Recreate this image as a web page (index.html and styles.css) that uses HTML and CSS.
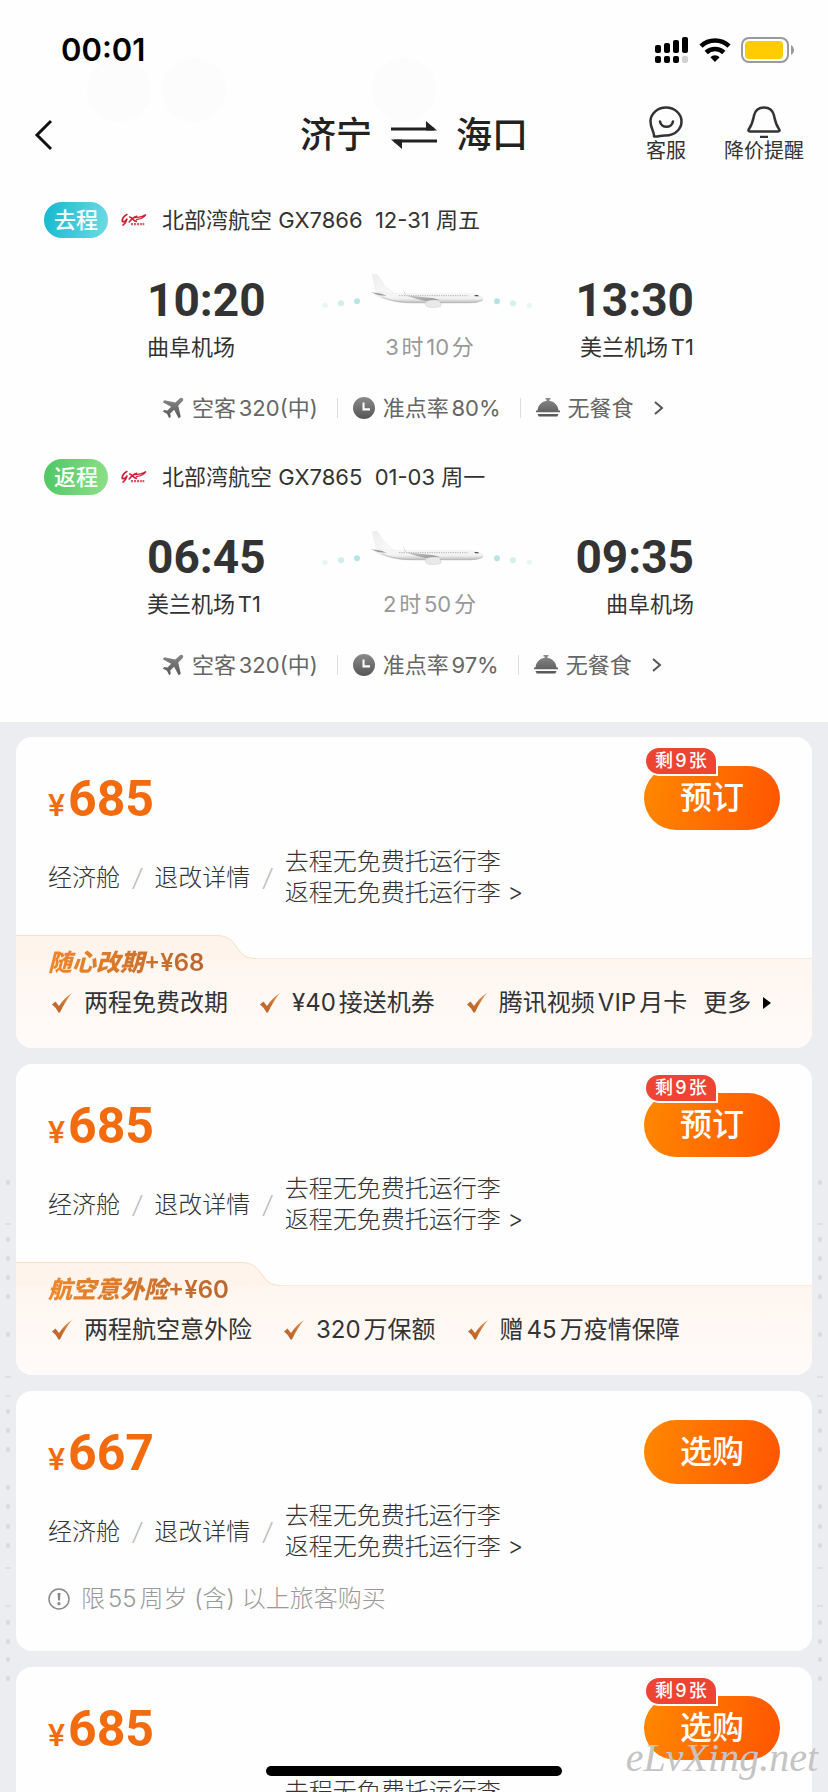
FILE: index.html
```html
<!DOCTYPE html>
<html lang="zh-CN">
<head>
<meta charset="utf-8">
<meta name="viewport" content="width=device-width, initial-scale=1">
<title>济宁 ⇌ 海口</title>
<link rel="stylesheet" href="styles.css">
</head>
<body>
<svg class="defs" width="0" height="0" aria-hidden="true">
  <defs>
    <linearGradient id="grey" x1="0" y1="0" x2="0" y2="1"><stop offset="0" stop-color="#8a8a8a"/><stop offset="1" stop-color="#565656"/></linearGradient>
    <linearGradient id="copper" x1="1" y1="0" x2="0" y2="1"><stop offset="0" stop-color="#eba063"/><stop offset=".5" stop-color="#c9702f"/><stop offset="1" stop-color="#b9602a"/></linearGradient>
    <linearGradient id="hull" x1="0" y1="0" x2="0" y2="1"><stop offset="0" stop-color="#fafafa"/><stop offset=".6" stop-color="#f0f0f0"/><stop offset="1" stop-color="#b9b9b9"/></linearGradient>
    <linearGradient id="fin" x1="0" y1="0" x2="1" y2="1"><stop offset="0" stop-color="#ededed"/><stop offset="1" stop-color="#fbfbfb"/></linearGradient>
    <linearGradient id="wing" x1="0" y1="0" x2="1" y2="1"><stop offset="0" stop-color="#e6e6e6"/><stop offset="1" stop-color="#8f8f8f"/></linearGradient>
    <symbol id="plane" viewBox="0 0 24 24"><path fill="url(#grey)" d="M22.600 1.300c1 1 .6 2.500-.5 3.700l-4.300 4.300 2.600 12.200-2.200 1.800-5-9.400-4.200 4.100.5 3.500-1.600 1.600-2.500-4.700L.8 15.900l1.600-1.600 3.500.5 4.100-4.200L.8 5.700l1.800-2.100 12 2.500L18.900 1.800c1.200-1.100 2.700-1.500 3.700-.5z"/></symbol>
    <symbol id="clock" viewBox="0 0 24 24"><circle cx="12" cy="12" r="12" fill="url(#grey)"/><path d="M11.500 6v7.500h7" fill="none" stroke="#fff" stroke-width="2.200"/></symbol>
    <symbol id="meal" viewBox="0 0 24 20"><path fill="url(#grey)" d="M9.500 0h5v1.600h-1.200v1.200c5 .6 8.700 4.600 9.200 9.700h1.500v1.700H0v-1.700h1.500c.5-5.100 4.200-9.100 9.200-9.700V1.600H9.500zM1.500 16h21l-1.200 2.400H2.700z"/></symbol>
    <symbol id="check" viewBox="0 0 20 20"><path fill="url(#copper)" d="M0 11.500 3.500 8.600 7 13C10.500 7.500 14.500 3.500 20 0c-4.500 5.500-8.500 12-12 19.500H6.500C4.800 16.200 2.800 13.500 0 11.500z"/></symbol>
    <symbol id="airline" viewBox="0 0 76 38"><g fill="none" stroke="#cf1f35" stroke-linecap="round"><path stroke-width="5" d="M17 3C8 7 2 17 4 23c4 2 10-1 14-8-2 7-6 15-12 19"/><path stroke-width="4.500" d="M25 10c8 0 10 12 20 13M46 8C38 10 30 17 24 25"/><path stroke-width="3.500" d="M38 12c12 0 24-2 35-9-6 8-16 13-28 15"/></g><g fill="#cf1f35"><path d="M29 28h6v6h-6zM38 28h6v6h-6zM47 28h6v6h-6zM56 28h5v6h-5zM63 28h5v6h-5z" opacity=".75"/></g></symbol>
    <symbol id="aircraft" viewBox="0 56 690 156">
      <g fill="#a9dfe1"><circle cx="138" cy="138" r="9" opacity=".85"/><circle cx="90" cy="144" r="9" opacity=".55"/><circle cx="42" cy="150" r="8" opacity=".28"/><circle cx="558" cy="138" r="9" opacity=".85"/><circle cx="606" cy="144" r="9" opacity=".5"/><circle cx="655" cy="150" r="8" opacity=".25"/></g>
      <path fill="url(#fin)" stroke="#e4e4e4" d="M182 51l14 2 26 38 30 25-56-4z"/>
      <path fill="url(#hull)" stroke="#dedede" d="M192 111c30 0 60 5 80 4h200c20 0 44 9 46 14-4 10-20 14-40 14H292c-40-2-75-10-100-24z"/>
      <path fill="none" stroke="#aaa" stroke-width="2.500" stroke-dasharray="4 3" d="M264 121h206"/>
      <path fill="#9a9a9a" d="M180 111l32 4 15 6-24-1z"/>
      <path fill="none" stroke="#b4b4b4" stroke-width="2" d="M212 124c26 12 60 18 90 18h170c20 0 36-3 44-9"/>
      <path fill="url(#wing)" d="M274 98l12 22 82 9 18 5-34 5c-20-4-50-11-70-20z"/>
      <path fill="#e9e9e9" stroke="#b5b5b5" d="M344 139c10-6 36-6 42-2l5 14c-6 6-34 7-43 3-5-4-6-10-4-15z"/>
      <path fill="#555" d="M490 119h10l5 4h-13z"/>
    </symbol>
    <symbol id="gutter" viewBox="0 0 10 520"><path fill="none" stroke="#d9dadf" stroke-width="4" stroke-linecap="round" d="M5 6v1M5 63v1M5 82v1M5 101v1M5 120v1M5 158v1M5 235v1M5 254v1M5 273v1M5 311v1M5 330v1M5 350v1M5 369v1M5 446v1M5 465v1M5 483v1M5 502v1"/><path stroke="#dfe0e5" stroke-width="2" d="M2 48h6M2 201h6M2 220h6M2 392h6M2 430h6"/></symbol>
  </defs>
</svg>

<div class="screen">
  <header class="top">
    <div class="glow" aria-hidden="true"><i></i><i></i><i></i></div>
    <div class="status">
      <span class="status-time">00:01</span>
      <div class="status-icons">
        <svg width="34" height="28" viewBox="0 0 34 28" aria-label="信号"><rect x="0" y="9" width="6" height="8" rx="2"/><rect x="9" y="7" width="6" height="10" rx="2"/><rect x="18" y="4" width="6" height="13" rx="2"/><rect x="27" y="1" width="6" height="16" rx="2"/><rect x="0" y="20" width="6" height="7" rx="2"/><rect x="9" y="20" width="6" height="7" rx="2"/><rect x="18" y="20" width="6" height="7" rx="2"/><rect x="27" y="20" width="6" height="7" rx="2" fill="#d0d0d0"/></svg>
        <svg width="32" height="24" viewBox="0 0 32 24" aria-label="无线网络"><path d="M16 24l-4.600-4.800a6.500 6.500 0 0 1 9.200 0z"/><path fill="none" stroke="#000" stroke-width="4.600" d="M2 8.200a20 20 0 0 1 28 0M7.200 14.500a12.700 12.700 0 0 1 17.600 0"/></svg>
        <svg width="54" height="26" viewBox="0 0 54 26" aria-label="电量"><rect x="1" y="1" width="46" height="24" rx="7" fill="none" stroke="#9a9a9a" stroke-width="2"/><rect x="4" y="4" width="38" height="18" rx="4" fill="#ffcc00"/><path fill="#9a9a9a" d="M50 8c4 2 4 8 0 10z"/></svg>
      </div>
    </div>
    <nav class="nav">
      <button class="back" aria-label="返回"><svg width="20" height="34" viewBox="0 0 20 34"><path d="M17 3 3 17l14 14"/></svg></button>
      <h1 class="title">济宁
        <svg width="46" height="28" viewBox="0 0 46 28" aria-label="往返"><path d="M0 8h43M3 20h43" fill="none" stroke="#222" stroke-width="3"/><path fill="#222" d="M35 0l11 9.500H35zM11 28 0 18.500h11z"/></svg>
        海口</h1>
      <div class="actions">
        <button class="action"><svg width="34" height="32" viewBox="0 0 34 32"><path stroke-linejoin="round" d="M5 30.500C5.500 26 1.500 22 1.500 15.500A15.500 14 0 1 1 17 29.500C12 29 10 31 5 30.500z"/><path d="M11 15.500c1 7 12 7 13 0" stroke-linecap="round"/></svg>客服</button>
        <button class="action"><svg width="34" height="32" viewBox="0 0 34 32"><path d="M3 25.500c-1.600 0-2-1-1-2.400C5.500 18 6 14 7 9.500 8.300 4 12 1.500 17 1.500S25.700 4 27 9.500c1 4.500 1.500 8.500 5 13.600 1 1.400.6 2.400-1 2.400z"/><path d="M13 31h8"/></svg>降价提醒</button>
      </div>
    </nav>

    <section class="leg">
      <div class="leg-head"><span class="badge badge-go">去程</span><svg class="airline"><use href="#airline"/></svg><span>北部湾航空 GX7866&nbsp; 12-31 周五</span></div>
      <div class="route">
        <div class="stop"><time>10:20</time><span>曲阜机场</span></div>
        <div class="flight"><svg class="aircraft"><use href="#aircraft"/></svg><span class="duration">3时10分</span></div>
        <div class="stop stop-end"><time>13:30</time><span>美兰机场T1</span></div>
      </div>
      <button class="facts">
        <span class="fact"><svg width="22" height="22"><use href="#plane"/></svg>空客320(中)</span>
        <span class="fact"><svg width="22" height="22"><use href="#clock"/></svg>准点率80%</span>
        <span class="fact"><svg width="24" height="20"><use href="#meal"/></svg>无餐食</span>
        <svg class="more" width="10" height="16" viewBox="0 0 10 16"><path d="M1 2l7 6-7 6"/></svg>
      </button>
    </section>

    <section class="leg">
      <div class="leg-head"><span class="badge badge-back">返程</span><svg class="airline"><use href="#airline"/></svg><span>北部湾航空 GX7865&nbsp; 01-03 周一</span></div>
      <div class="route">
        <div class="stop"><time>06:45</time><span>美兰机场T1</span></div>
        <div class="flight"><svg class="aircraft"><use href="#aircraft"/></svg><span class="duration">2时50分</span></div>
        <div class="stop stop-end"><time>09:35</time><span>曲阜机场</span></div>
      </div>
      <button class="facts">
        <span class="fact"><svg width="22" height="22"><use href="#plane"/></svg>空客320(中)</span>
        <span class="fact"><svg width="22" height="22"><use href="#clock"/></svg>准点率97%</span>
        <span class="fact"><svg width="24" height="20"><use href="#meal"/></svg>无餐食</span>
        <svg class="more" width="10" height="16" viewBox="0 0 10 16"><path d="M1 2l7 6-7 6"/></svg>
      </button>
    </section>
  </header>

  <main class="offers">
    <svg class="gutter gutter-left" aria-hidden="true"><use href="#gutter"/></svg>
    <svg class="gutter gutter-right" aria-hidden="true"><use href="#gutter"/></svg>

    <article class="card">
      <div class="card-top"><div class="price"><small>¥</small>685</div><button class="buy">预订<span class="left">剩9张</span></button></div>
      <div class="terms"><span>经济舱</span><i>/</i><span>退改详情</span><i>/</i><span>去程无免费托运行李<br>返程无免费托运行李 &gt;</span></div>
      <div class="promo">
        <div class="promo-edge"><div class="tab"><b class="promo-name"><em>随心改期</em>+¥68</b></div><svg class="curve" width="40" height="24" viewBox="0 0 40 24"><path class="fill" d="M0 0c12 0 16 5 21 12s8 11 19 11v1H0z"/><path class="line" d="M0 .5c12 0 16 5 21 12s8 11 19 11"/></svg></div>
        <ul class="perks">
          <li><svg><use href="#check"/></svg>两程免费改期</li><li><svg><use href="#check"/></svg>¥40接送机券</li><li><svg><use href="#check"/></svg>腾讯视频VIP月卡</li>
          <li class="all">更多<svg viewBox="0 0 8 12"><path d="M0 0l8 6-8 6z"/></svg></li>
        </ul>
      </div>
    </article>

    <article class="card">
      <div class="card-top"><div class="price"><small>¥</small>685</div><button class="buy">预订<span class="left">剩9张</span></button></div>
      <div class="terms"><span>经济舱</span><i>/</i><span>退改详情</span><i>/</i><span>去程无免费托运行李<br>返程无免费托运行李 &gt;</span></div>
      <div class="promo">
        <div class="promo-edge"><div class="tab"><b class="promo-name"><em>航空意外险</em>+¥60</b></div><svg class="curve" width="40" height="24" viewBox="0 0 40 24"><path class="fill" d="M0 0c12 0 16 5 21 12s8 11 19 11v1H0z"/><path class="line" d="M0 .5c12 0 16 5 21 12s8 11 19 11"/></svg></div>
        <ul class="perks">
          <li><svg><use href="#check"/></svg>两程航空意外险</li><li><svg><use href="#check"/></svg>320万保额</li><li><svg><use href="#check"/></svg>赠45万疫情保障</li>
        </ul>
      </div>
    </article>

    <article class="card">
      <div class="card-top"><div class="price"><small>¥</small>667</div><button class="buy">选购</button></div>
      <div class="terms"><span>经济舱</span><i>/</i><span>退改详情</span><i>/</i><span>去程无免费托运行李<br>返程无免费托运行李 &gt;</span></div>
      <p class="notice"><svg width="22" height="22" viewBox="0 0 22 22"><circle cx="11" cy="11" r="10" fill="none" stroke="#888" stroke-width="1.500"/><path d="M9.500 5h3l-.6 7.500h-1.800z"/><circle cx="11" cy="15.700" r="1.600"/></svg>限55周岁 (含) 以上旅客购买</p>
    </article>

    <article class="card">
      <div class="card-top"><div class="price"><small>¥</small>685</div><button class="buy">选购<span class="left">剩9张</span></button></div>
      <div class="terms"><span>经济舱</span><i>/</i><span>退改详情</span><i>/</i><span>去程无免费托运行李<br>返程无免费托运行李 &gt;</span></div>
    </article>
  </main>

  <div class="home-bar"></div>
  <div class="watermark">eLvXing.net</div>
</div>
</body>
</html>
```
FILE: styles.css
```css
* { box-sizing: border-box; }

body {
  margin: 0;
  color: #333;
  background: #ecedf1;
  font-family: Inter, "Noto Sans CJK SC", sans-serif;
  font-size: 22px;
  line-height: 32px;
  text-autospace: normal;
}

button {
  margin: 0;
  padding: 0;
  border: 0;
  background: none;
  color: inherit;
  font: inherit;
}

svg { display: block; flex: none; }

.defs { position: absolute; }

.screen {
  position: relative;
  height: 100vh;
  overflow: hidden;
}

/* Header */
.top {
  position: relative;
  padding-bottom: 41px;
  background: #fefefe;
}

.glow i {
  position: absolute;
  top: 58px;
  left: 87px;
  width: 64px;
  height: 64px;
  border-radius: 50%;
  background: #fcfcfc;
}
.glow i:nth-child(2) { left: 162px; }
.glow i:nth-child(3) { left: 372px; }

.status {
  position: relative;
  display: flex;
  align-items: center;
  justify-content: space-between;
  height: 100px;
  padding: 0 33px 0 61px;
}
.status-time {
  color: #000;
  font-size: 31px;
  font-weight: 600;
}
.status-icons {
  display: flex;
  align-items: center;
  gap: 10px;
}

.nav {
  position: relative;
  display: grid;
  grid-template-columns: 1fr auto 1fr;
  align-items: center;
  height: 70px;
  padding: 0 24px;
}
.back { padding-left: 10px; }
.back svg {
  fill: none;
  stroke: #111;
  stroke-width: 3;
}
.title {
  display: flex;
  align-items: center;
  gap: 19px;
  margin: 0;
  color: #222;
  font-size: 36px;
  font-weight: 500;
  line-height: 48px;
}
.actions {
  display: flex;
  justify-content: flex-end;
  gap: 38px;
}
.action {
  display: flex;
  flex-direction: column;
  align-items: center;
  font-size: 20px;
  line-height: 26px;
}
.action svg {
  fill: none;
  stroke: #333;
  stroke-width: 2.500;
}

/* Flight legs */
.leg { padding-top: 32px; }
.leg + .leg { padding-top: 35px; }

.leg-head {
  display: flex;
  align-items: center;
  padding-left: 44px;
}
.badge {
  padding: 0 10px;
  border-radius: 18px;
  color: #fff;
  font-weight: 500;
  line-height: 36px;
}
.badge-go { background: linear-gradient(100deg, #14b8d0, #6fdbe4); }
.badge-back { background: linear-gradient(100deg, #4cc763, #8fe08a); }
.airline {
  width: 26px;
  height: 14px;
  margin: 0 15px 0 13px;
}

.route {
  display: grid;
  grid-template-columns: 1fr auto 1fr;
  margin-top: 36px;
  padding: 0 134px 0 147px;
}
.stop,
.flight {
  display: flex;
  flex-direction: column;
  align-items: flex-start;
  gap: 5px;
}
.stop-end { align-items: flex-end; }
.stop time {
  font-family: Roboto, sans-serif;
  font-size: 46px;
  font-weight: 700;
  line-height: 52px;
}
.flight {
  align-items: center;
  padding-left: 11px;
  color: #999;
}
.duration { padding-left: 7px; }
.aircraft {
  width: 230px;
  height: 52px;
  overflow: visible;
}

.facts {
  display: flex;
  align-items: center;
  margin-top: 29px;
  padding-left: 162px;
  color: #666;
}
.fact {
  display: flex;
  align-items: center;
  gap: 8px;
}
.fact + .fact {
  margin-left: 19px;
  padding-left: 16px;
  background: linear-gradient(#ddd, #ddd) left center / 1px 20px no-repeat;
}
.more {
  margin-left: 20px;
  fill: none;
  stroke: #555;
  stroke-width: 2;
}

/* Offers */
.offers {
  position: relative;
  display: flex;
  flex-direction: column;
  gap: 16px;
  padding: 15px 16px;
}
.gutter {
  position: absolute;
  top: 454px;
  width: 10px;
  height: 520px;
}
.gutter-left { left: 3px; }
.gutter-right { right: 3px; }

.card {
  overflow: hidden;
  border-radius: 16px;
  background: #fefefe;
}
.card-top {
  display: flex;
  align-items: flex-start;
  justify-content: space-between;
  padding: 29px 32px 0;
}
.price {
  display: flex;
  align-items: baseline;
  gap: 3px;
  color: #f26b0f;
  font-family: Roboto, sans-serif;
  font-size: 50px;
  font-weight: 700;
  line-height: 66px;
}
.price small {
  font-size: 32px;
  font-weight: 500;
  line-height: 32px;
}
.buy {
  position: relative;
  width: 136px;
  border-radius: 32px;
  background: linear-gradient(100deg, #ff8800, #ff5500);
  color: #fff;
  font-size: 32px;
  font-weight: 500;
  line-height: 64px;
}
.left {
  position: absolute;
  top: -20px;
  left: 0;
  padding: 0 9px;
  border: 2px solid #fff;
  border-radius: 16px 16px 0 16px;
  background: #ee4433;
  font-size: 18px;
  line-height: 26px;
}

.terms {
  display: flex;
  align-items: center;
  margin-top: 14px;
  padding: 0 32px;
  font-size: 24px;
  font-weight: 300;
  line-height: 31px;
}
.terms i {
  padding: 0 13px;
  color: #bbb;
}

.promo {
  margin-top: 27px;
  background: linear-gradient(#fef4ec, #fffbf9);
}
.promo-edge {
  display: flex;
  height: 24px;
  background: #fefefe;
}
.tab {
  padding: 0 12px 0 32px;
  border-top: 1px solid #f8dfc4;
  background: #fef4ec;
}
.curve .fill { fill: #fef4ec; }
.curve .line { fill: none; stroke: #f8dfc4; }
.promo-edge::after {
  content: "";
  flex: 1;
  border-bottom: 1px solid #fcebdc;
}
.promo-name {
  display: block;
  padding-top: 11px;
  background: linear-gradient(90deg, #f0882a, #b9652f);
  background-clip: text;
  color: transparent;
  font-size: 24px;
  font-weight: 600;
}
.promo-name em { font-weight: 900; }

.perks {
  display: flex;
  gap: 32px;
  margin: 0;
  padding: 28px 36px 29px;
  list-style: none;
  font-size: 24px;
}
.perks li {
  display: flex;
  align-items: center;
  gap: 12px;
  white-space: nowrap;
}
.perks svg {
  width: 20px;
  height: 20px;
}
.perks .all {
  margin-left: -16px;
}
.perks .all svg {
  width: 8px;
  height: 12px;
}

.notice {
  display: flex;
  align-items: center;
  gap: 11px;
  margin: 0;
  padding: 21px 32px 36px;
  color: #999;
  font-size: 24px;
  font-weight: 300;
}
.notice svg { fill: #888; }

/* Overlays */
.home-bar {
  position: absolute;
  bottom: 16px;
  left: 50%;
  width: 296px;
  height: 10px;
  margin-left: -148px;
  border-radius: 5px;
  background: #000;
}
.watermark {
  position: absolute;
  right: 10px;
  bottom: 14px;
  color: #c4c4c4;
  font-family: "Liberation Serif", serif;
  font-size: 40px;
  font-style: italic;
  line-height: 40px;
}
```
